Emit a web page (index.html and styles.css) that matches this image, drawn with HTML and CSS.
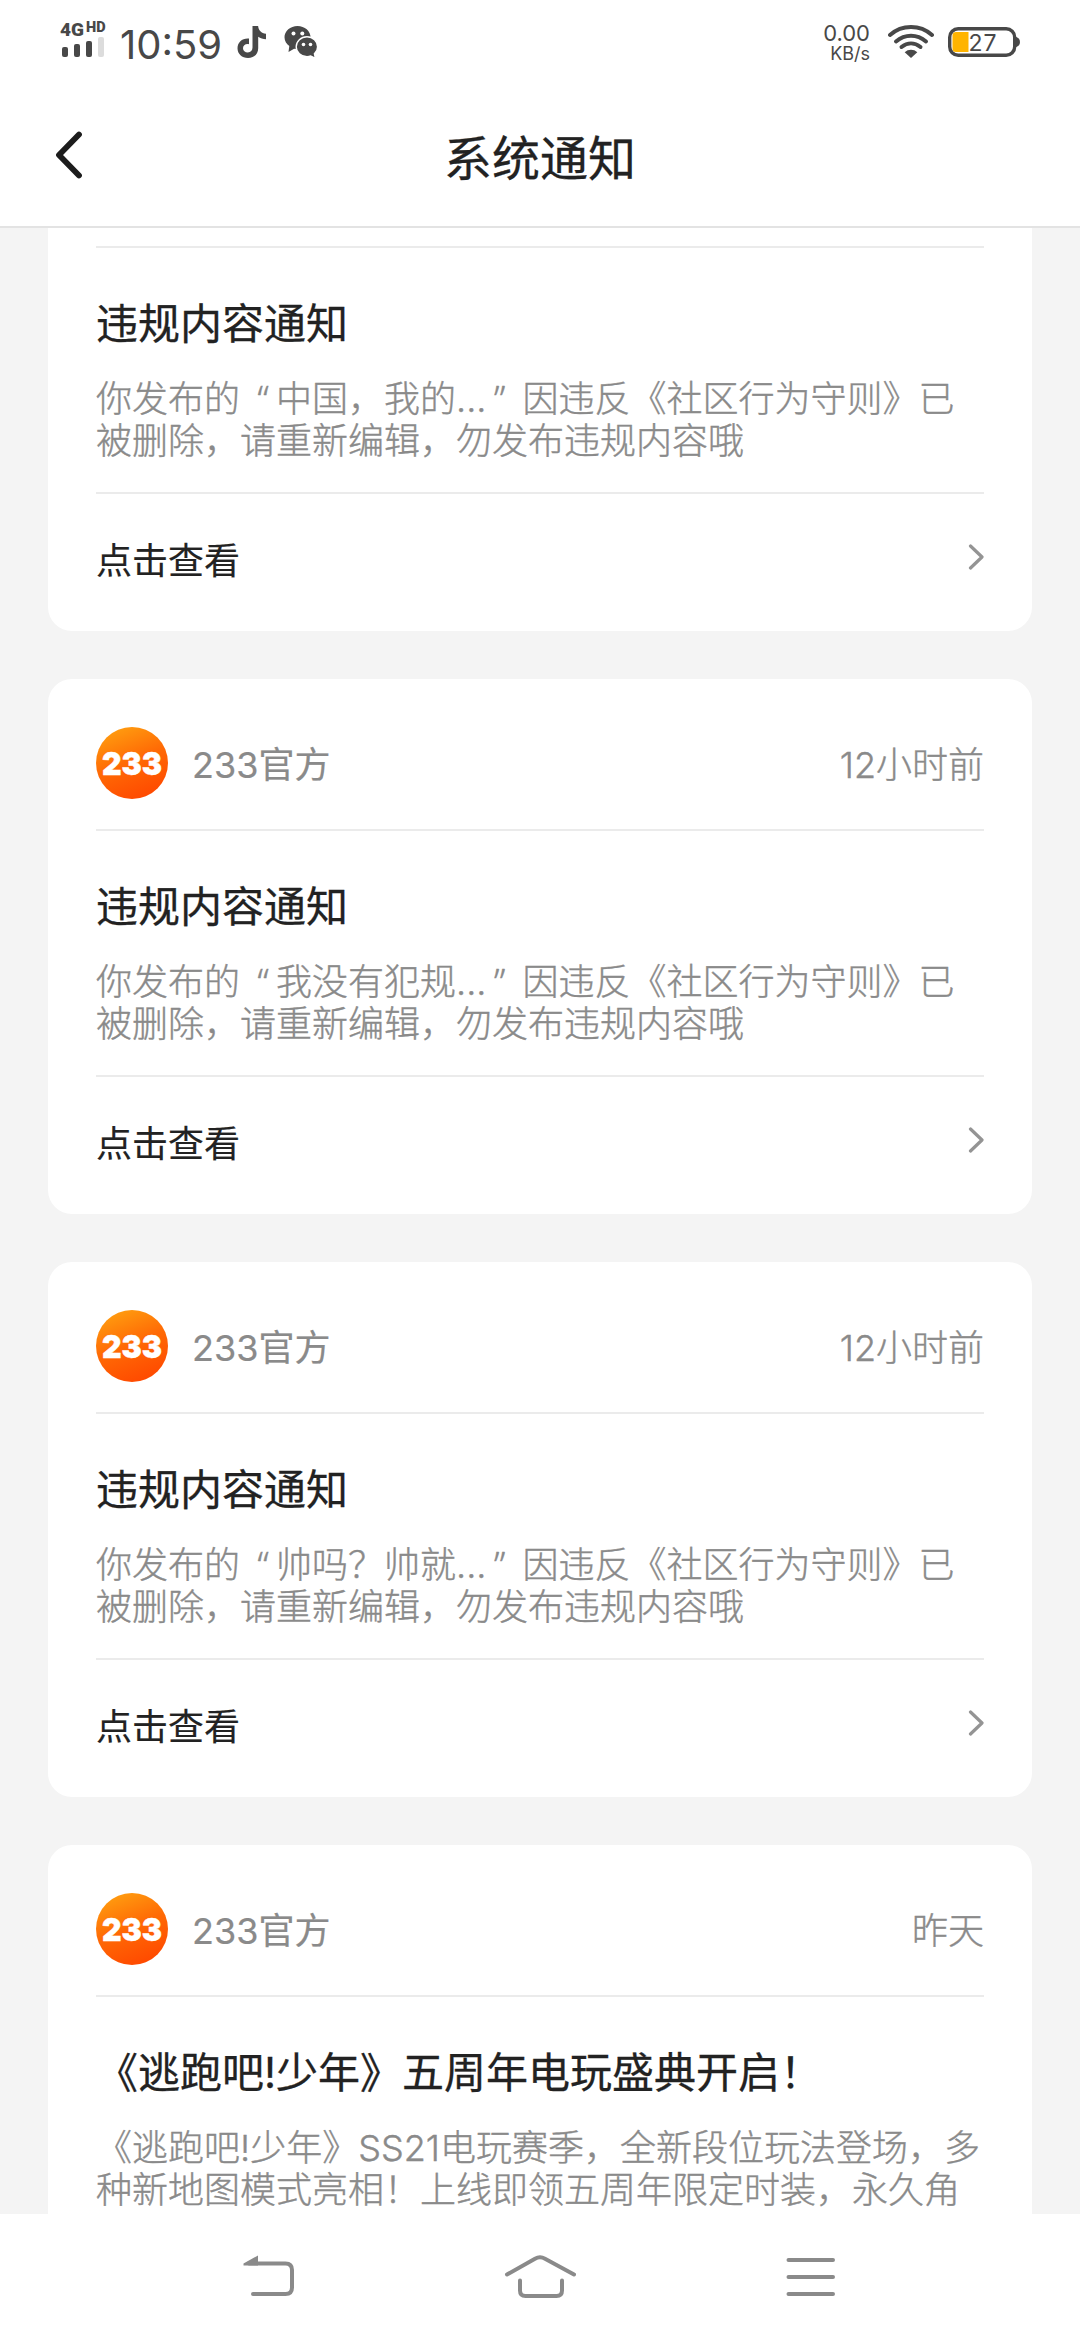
FILE: index.html
```html
<!DOCTYPE html>
<html lang="zh-CN">
<head>
<meta charset="utf-8">
<title>系统通知</title>
<link rel="stylesheet" href="styles.css">
</head>
<body>
<svg class="defs" width="0" height="0" aria-hidden="true">
  <defs>
    <linearGradient id="brand" x1="0.2" y1="0" x2="0.6" y2="1">
      <stop offset="0" stop-color="#ffa010"/>
      <stop offset="0.5" stop-color="#ff6a05"/>
      <stop offset="1" stop-color="#ff4a00"/>
    </linearGradient>
    <symbol id="avatar" viewBox="0 0 72 72">
      <circle cx="36" cy="36" r="36" fill="url(#brand)"/>
      <text class="avatar-text" x="6" y="47.5" textLength="60" lengthAdjust="spacingAndGlyphs">233</text>
    </symbol>
    <symbol id="chevron" viewBox="0 0 16 28">
      <path d="M2.5 3L14 14L2.5 25" fill="none" stroke="#949494" stroke-width="3.200" stroke-linecap="round" stroke-linejoin="round"/>
    </symbol>
  </defs>
</svg>
<div class="screen">
  <div class="status">
    <div class="status-left">
      <div class="signal">
        <div class="net">4G<span class="net-hd">HD</span></div>
        <svg class="bars" width="44" height="20" viewBox="0 0 44 20">
          <rect x="0" y="10" width="6" height="10" rx="2"/><rect x="12" y="7" width="6" height="13" rx="2"/><rect x="24" y="4" width="6" height="16" rx="2"/><rect x="36" y="0" width="6" height="20" rx="2" fill="#dcdcdc"/>
        </svg>
      </div>
      <div class="clock">10:59</div>
      <svg class="douyin" width="30" height="34" viewBox="0 0 30 34">
        <path d="M15.5 1h5.6c.4 4.300 3.200 7.300 7.900 7.700v5.500c-3-.1-5.600-1-7.800-2.500v11.500C21.200 29 17 33 11 33S.5 28.800.5 23.200c0-6 5-10.300 11.500-9.600v5.700c-3.300-.8-6 1.100-6 3.900 0 2.500 2.100 4.300 4.800 4.300 3 0 4.700-1.900 4.700-4.900z"/>
      </svg>
      <svg class="wechat" width="34" height="34" viewBox="0 0 34 34">
        <path d="M13.500 1C6.300 1 .5 6 .5 12.300c0 3.600 1.900 6.700 4.800 8.700L4.500 27l5.600-3.300c1.200.3 2.300.4 3.500.4 7.200 0 13-5.100 13-11.600S20.700 1 13.500 1z"/>
        <path d="M23 11.800c-6 0-10.800 4.400-10.800 9.900S17 31.600 23 31.600c1.300 0 2.600-.2 3.700-.6l4.700 2.300-1-4.500c2.100-1.800 3.200-4.300 3.200-7.100 0-5.500-4.700-9.900-10.600-9.900z" stroke="#fff" stroke-width="1.400"/>
        <g fill="#fff"><circle cx="9.500" cy="8.500" r="2"/><circle cx="18.300" cy="8.500" r="2"/><circle cx="19.500" cy="19.500" r="1.800"/><circle cx="26.500" cy="19.500" r="1.800"/></g>
      </svg>
    </div>
    <div class="status-right">
      <div class="speed"><span class="speed-num">0.00</span><span class="speed-unit">KB/s</span></div>
      <svg class="wifi" width="46" height="34" viewBox="0 0 46 34">
        <g fill="none" stroke="#484848" stroke-width="4" stroke-linecap="round"><path d="M2 10C14-.6 32-.6 44 10"/><path d="M8 16.500c9-7.800 21-7.800 30 0"/><path d="M13.500 22c6-4.800 13-4.800 19 0"/></g>
        <path d="M23 33l-6.300-5.800c3.500-3.300 9.100-3.300 12.600 0z"/>
      </svg>
      <svg class="battery" width="72" height="30" viewBox="0 0 72 30">
        <rect x="1.700" y="1.700" width="65" height="26.600" rx="8.500" fill="none" stroke="#484848" stroke-width="3.400"/>
        <path d="M68 10c5.300 1 5.300 9 0 10z"/>
        <path d="M8 5h12.500v20H8a3.500 3.500 0 0 1-3.500-3.500v-13A3.500 3.500 0 0 1 8 5z" fill="#ffb400"/>
        <text class="battery-text" x="20.500" y="24" textLength="28">27</text>
      </svg>
    </div>
  </div>
  <header class="topbar">
    <svg class="back" width="28" height="50" viewBox="0 0 28 50"><path d="M24 4.500L4 25L24 45.500" fill="none" stroke="#1c1c1c" stroke-width="5.800" stroke-linecap="round" stroke-linejoin="round"/></svg>
    <h1 class="topbar-title">系统通知</h1>
  </header>
  <main class="feed">
    <article class="card card-cut">
      <div class="card-body">
        <h2 class="card-title">违规内容通知</h2>
        <p class="card-text">你发布的<span class="quote quote-open">“</span>中国，我的...<span class="quote quote-close">”</span>因违反《社区行为守则》已<br>被删除，请重新编辑，勿发布违规内容哦</p>
      </div>
      <div class="card-foot"><span>点击查看</span><svg class="more" width="16" height="28"><use href="#chevron"/></svg></div>
    </article>
    <article class="card">
      <div class="card-head"><svg class="avatar" width="72" height="72"><use href="#avatar"/></svg><span class="author">233官方</span><time class="time">12小时前</time></div>
      <div class="card-body">
        <h2 class="card-title">违规内容通知</h2>
        <p class="card-text">你发布的<span class="quote quote-open">“</span>我没有犯规...<span class="quote quote-close">”</span>因违反《社区行为守则》已<br>被删除，请重新编辑，勿发布违规内容哦</p>
      </div>
      <div class="card-foot"><span>点击查看</span><svg class="more" width="16" height="28"><use href="#chevron"/></svg></div>
    </article>
    <article class="card">
      <div class="card-head"><svg class="avatar" width="72" height="72"><use href="#avatar"/></svg><span class="author">233官方</span><time class="time">12小时前</time></div>
      <div class="card-body">
        <h2 class="card-title">违规内容通知</h2>
        <p class="card-text">你发布的<span class="quote quote-open">“</span>帅吗？帅就...<span class="quote quote-close">”</span>因违反《社区行为守则》已<br>被删除，请重新编辑，勿发布违规内容哦</p>
      </div>
      <div class="card-foot"><span>点击查看</span><svg class="more" width="16" height="28"><use href="#chevron"/></svg></div>
    </article>
    <article class="card">
      <div class="card-head"><svg class="avatar" width="72" height="72"><use href="#avatar"/></svg><span class="author">233官方</span><time class="time">昨天</time></div>
      <div class="card-body card-body-last">
        <h2 class="card-title">《逃跑吧!少年》五周年电玩盛典开启！</h2>
        <p class="card-text">《逃跑吧!少年》SS21电玩赛季，全新段位玩法登场，多<br>种新地图模式亮相！上线即领五周年限定时装，永久角</p>
      </div>
    </article>
  </main>
  <nav class="navbar">
    <svg width="54" height="46" viewBox="0 0 54 46"><path d="M11 40H43.500Q50 40 50 33.500V16Q50 9.500 43.500 9.500H7" fill="none" stroke="#8a8a8a" stroke-width="4" stroke-linecap="round"/><path d="M1.500 11.500v-2L16 1.500v10z" fill="#8a8a8a"/></svg>
    <svg width="72" height="46" viewBox="0 0 72 46"><g fill="none" stroke="#8a8a8a" stroke-width="4" stroke-linecap="round"><path d="M3 20.500L31 4.700Q36 2 41 4.700L70 20.500"/><path d="M16 26.500V36.500Q16 42 21.500 42H52.500Q58 42 58 36.500V26.500"/></g></svg>
    <svg width="54" height="46" viewBox="0 0 54 46"><path d="M4.500 6H49M4.500 23H49M4.500 40H49" stroke="#8a8a8a" stroke-width="4" stroke-linecap="round"/></svg>
  </nav>
</div>
</body>
</html>
```
FILE: styles.css
```css
* { box-sizing: border-box; margin: 0; padding: 0; }

body {
  background: #fff;
  font-family: Inter, "Noto Sans CJK SC", sans-serif;
  color: #222;
}

svg { display: block; flex: none; }
.defs { position: absolute; }

.screen {
  width: 1080px;
  height: 2340px;
  display: flex;
  flex-direction: column;
  overflow: hidden;
}

/* Status bar */
.status {
  height: 84px;
  flex: none;
  display: flex;
  justify-content: space-between;
  padding: 0 60px 0 60px;
  color: #484848;
  fill: #484848;
}
.status-left, .status-right { display: flex; align-items: flex-start; }
.signal { width: 48px; padding-top: 20px; }
.net {
  height: 17px;
  display: flex;
  font: 900 19px/19px Roboto, sans-serif;
  white-space: nowrap;
}
.net-hd { margin-left: 2px; font-size: 14.500px; line-height: 15px; }
.bars { margin-left: 2px; }
.clock {
  width: 113px;
  margin-left: 12px;
  padding-top: 20px;
  font-size: 40px;
  line-height: 50px;
  white-space: nowrap;
}
.douyin { margin: 25px 0 0 4px; }
.wechat { margin: 25px 0 0 17px; }
.speed {
  width: 60px;
  display: flex;
  flex-direction: column;
  align-items: flex-end;
  padding-top: 21px;
}
.speed-num { font-size: 22px; line-height: 24px; }
.speed-unit { font-size: 18px; line-height: 18px; }
.wifi { margin: 25px 0 0 18px; }
.battery { margin: 27px 0 0 14px; }
.battery-text { font: 400 23px Inter, sans-serif; }

/* Title bar */
.topbar {
  height: 144px;
  flex: none;
  display: flex;
  align-items: flex-start;
  padding: 0 54px 0 55px;
  border-bottom: 2px solid #e3e3e3;
}
.back { margin-top: 46px; }
.topbar-title {
  flex: 1;
  margin: 36px 29px 0 0;
  text-align: center;
  font-family: "Noto Sans CJK SC", sans-serif;
  font-size: 48px;
  line-height: 70px;
  font-weight: 400;
  -webkit-text-stroke: 0.3px #222;
}

/* Notification list */
.feed {
  flex: 1;
  min-height: 0;
  display: flex;
  flex-direction: column;
  gap: 48px;
  padding: 0 48px;
  background: #f4f4f4;
  overflow: hidden;
}
.card {
  flex: none;
  padding: 0 48px;
  background: #fff;
  border-radius: 24px;
}
.card-cut { padding-top: 18px; border-radius: 0 0 24px 24px; }
.card-head {
  height: 150px;
  display: flex;
  align-items: flex-start;
  padding-top: 48px;
  color: #8a8a8a;
  font-size: 36px;
  line-height: 76px;
}
.author { margin-left: 24px; -webkit-text-stroke: 0.2px #8a8a8a; }
.time {
  margin-left: auto;
  font-weight: 300;
  -webkit-text-stroke: 0.4px #8a8a8a;
}
.card-body {
  height: 248px;
  padding-top: 45px;
  border-top: 2px solid #ebebeb;
  border-bottom: 2px solid #ebebeb;
}
.card-body-last { border-bottom: 0; }
.card-title {
  font-size: 42px;
  line-height: 62px;
  font-weight: 400;
  white-space: nowrap;
  -webkit-text-stroke: 0.3px #222;
}
.card-text {
  margin-top: 23px;
  color: #8a8a8a;
  font-size: 36px;
  line-height: 42px;
  font-weight: 300;
  white-space: nowrap;
  -webkit-text-stroke: 0.4px #8a8a8a;
}

/* Curly quotes take a full character cell */
.quote { display: inline-block; width: 36px; text-align: center; font-family: "Noto Sans", sans-serif; }
.quote-open { padding-left: 10px; }
.quote-close { padding-right: 10px; }

.card-foot {
  height: 137px;
  display: flex;
  justify-content: space-between;
  align-items: flex-start;
  font-size: 36px;
  line-height: 54px;
  padding-top: 40px;
  -webkit-text-stroke: 0.2px #222;
}
.more { margin-top: 9px; }

/* System navigation */
.navbar {
  height: 126px;
  flex: none;
  display: flex;
  justify-content: space-between;
  padding: 40px 242px 0;
  background: #fff;
}

.avatar-text { font: 900 32px Inter, sans-serif; fill: #fff; stroke: #fff; stroke-width: 0.5px; }
```
